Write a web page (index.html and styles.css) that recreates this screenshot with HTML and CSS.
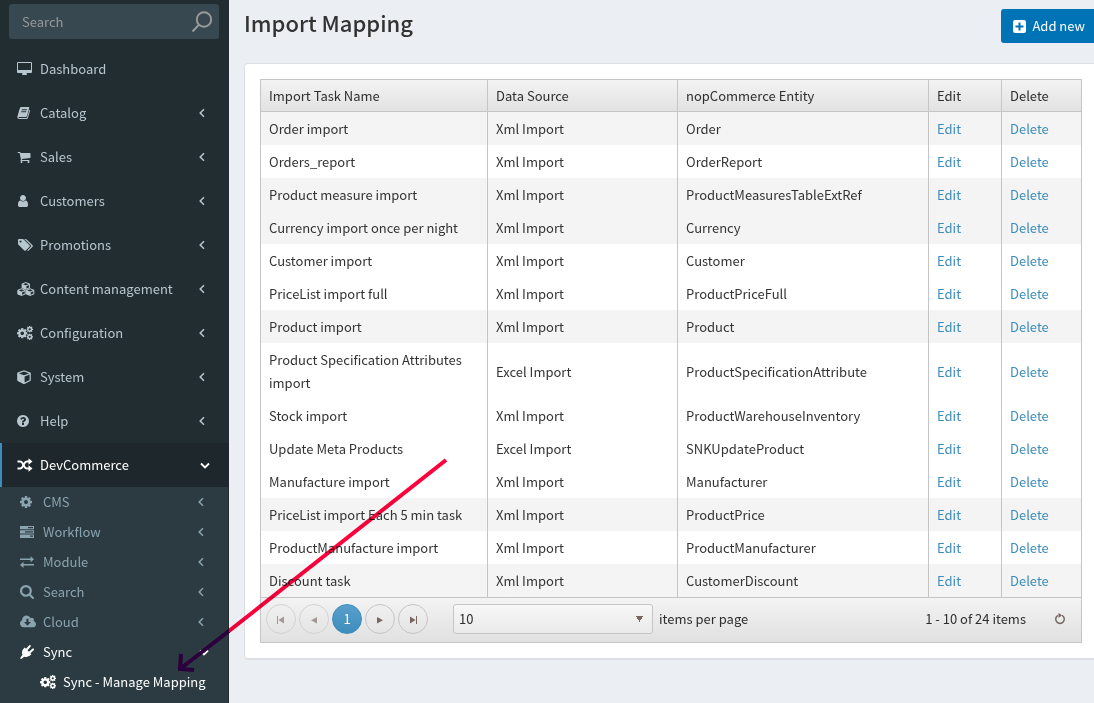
FILE: index.html
```
<!DOCTYPE html>
<html lang="en">
<head>
<meta charset="utf-8">
<title>Import Mapping</title>
<meta name="viewport" content="width=device-width, initial-scale=1">
<link rel="stylesheet" href="styles.css">
</head>
<body>
<svg class="sprite" aria-hidden="true">
  <symbol id="i-desktop" viewBox="0 0 1920 1792"><path d="M1728 992v-832q0-13-9.500-22.500t-22.500-9.500h-1600q-13 0-22.500 9.500t-9.500 22.500v832q0 13 9.500 22.500t22.500 9.500h1600q13 0 22.500-9.500t9.500-22.500zm128-832v1088q0 66-47 113t-113 47h-544q0 37 16 77.500t32 71 16 43.500q0 26-19 45t-45 19h-512q-26 0-45-19t-19-45q0-14 16-44t32-70 16-78h-544q-66 0-113-47t-47-113v-1088q0-66 47-113t113-47h1600q66 0 113 47t47 113z"/></symbol>
  <symbol id="i-book" viewBox="0 0 14 14"><path fill-rule="evenodd" d="M4.300 1h7.200q1 0 .7 1L10 10q-.3.900-1.200.900H2.200q-.8 0-.6.500.2.500.8.500h6.900q.6 0 .8-.6l2.300-7.600q.9.300.6 1.300L10.900 12q-.3 1-1.400 1H2.300Q.2 13 .3 10.700L2.800 2.300Q3.200 1 4.300 1zM5 3.300l-.3.900h5l.3-.9zM4.400 5.300l-.3.900h5l.3-.9z"/></symbol>
  <symbol id="i-cart" viewBox="0 0 1792 1792"><path d="M704 1536q0 52-38 90t-90 38-90-38-38-90 38-90 90-38 90 38 38 90zm896 0q0 52-38 90t-90 38-90-38-38-90 38-90 90-38 90 38 38 90zm128-1088v512q0 24-16.500 42.500t-40.500 21.500l-1044 122q13 60 13 70 0 16-24 64h920q26 0 45 19t19 45-19 45-45 19h-1024q-26 0-45-19t-19-45q0-11 8-31.500t16-36 21.500-40 15.500-29.500l-177-823h-204q-26 0-45-19t-19-45 19-45 45-19h256q16 0 28.500 6.500t19.500 15.500 13 24.500 8 26 5.500 29.500 4.500 26h1201q26 0 45 19t19 45z"/></symbol>
  <symbol id="i-user" viewBox="256 128 1280 1536"><path d="M1536 1399q0 109-62.500 187t-150.500 78h-854q-88 0-150.500-78t-62.500-187q0-85 8.500-160.500t31.500-152 58.500-131 94-89 134.500-34.500q131 128 313 128t313-128q76 0 134.500 34.500t94 89 58.500 131 31.500 152 8.500 160.500zm-256-887q0 159-112.500 271.500t-271.500 112.500-271.500-112.500-112.500-271.500 112.500-271.500 271.500-112.500 271.500 112.500 112.500 271.500z"/></symbol>
  <symbol id="i-tags" viewBox="0 64 2048 1664"><path d="M576 448q0-53-37.500-90.500t-90.500-37.500-90.500 37.500-37.500 90.500 37.500 90.500 90.500 37.500 90.500-37.500 37.500-90.500zm1067 576q0 53-37 90l-491 492q-39 37-91 37-53 0-90-37l-715-716q-38-37-64.500-101t-26.500-117v-416q0-52 38-90t90-38h416q53 0 117 26.500t102 64.500l715 714q37 39 37 91zm384 0q0 53-37 90l-491 492q-39 37-91 37-36 0-59-14t-53-45l470-470q37-37 37-90 0-52-37-91l-715-714q-38-38-102-64.500t-117-26.500h224q53 0 117 26.500t102 64.500l715 714q37 39 37 91z"/></symbol>
  <symbol id="i-cube" viewBox="0 0 14 14"><path fill-rule="evenodd" d="M7 .3l6.300 2.300q.5.200.5.800v6.900q0 .5-.5.800L7.500 13.900q-.5.200-1 0L.7 11.100q-.5-.3-.5-.8V3.400q0-.6.500-.8zM7 1.500L1.900 3.400 7 5.300l5.100-1.900zM7.600 12.500l5-2.500V4.600l-5 1.800z"/></symbol>
  <symbol id="i-cubes" viewBox="0 0 18 14"><g id="box"><path fill-rule="evenodd" d="M4.500 6.300l3.700 1.500q.5.200.5.700v3.200q0 .5-.5.700L5 13.800q-.5.200-1 0L.8 12.400q-.5-.2-.5-.7V8.500q0-.5.5-.7zM4.500 7.200L1.800 8.400l2.700 1.100 2.700-1.100zM5.100 12.800l2.600-1.200V9.300l-2.600 1.100z"/></g><use href="#box" x="8.600"/><use href="#box" x="4.300" y="-6.200"/></symbol>
  <symbol id="i-cog" viewBox="128 128 1536 1536"><path d="M1152 896q0-106-75-181t-181-75-181 75-75 181 75 181 181 75 181-75 75-181zm512-109v222q0 12-8 23t-20 13l-185 28q-19 54-39 91 35 50 107 138 10 12 10 25t-9 23q-27 37-99 108t-94 71q-12 0-26-9l-138-108q-44 23-91 38-16 136-29 186-7 28-36 28h-222q-14 0-24.500-8.500t-11.500-21.500l-28-184q-49-16-90-37l-141 107q-10 9-25 9-14 0-25-11-126-114-165-168-7-10-7-23 0-12 8-23 15-21 51-66.500t54-70.500q-27-50-41-99l-183-27q-13-2-21-12.500t-8-23.500v-222q0-12 8-23t19-13l186-28q14-46 39-92-40-57-107-138-10-12-10-24 0-10 9-23 26-36 98.500-107.500t94.500-71.500q13 0 26 10l138 107q44-23 91-38 16-136 29-186 7-28 36-28h222q14 0 24.500 8.500t11.500 21.500l28 184q49 16 90 37l142-107q9-9 24-9 13 0 25 10 129 119 165 170 7 8 7 22 0 12-8 23-15 21-51 66.500t-54 70.500q26 50 41 98l183 28q13 2 21 12.500t8 23.500z"/></symbol>
  <symbol id="i-cogs" viewBox="0 0 16 14"><use href="#i-cog" x="0" y="2" width="10.500" height="10.500"/><use href="#i-cog" x="9.500" y="0" width="6.500" height="6.500"/><use href="#i-cog" x="9.500" y="7.500" width="6.500" height="6.500"/></symbol>
  <symbol id="i-help" viewBox="128 128 1536 1536"><path d="M1024 1376v-192q0-14-9-23t-23-9h-192q-14 0-23 9t-9 23v192q0 14 9 23t23 9h192q14 0 23-9t9-23zm256-672q0-88-55.500-163t-138.500-116-170-41q-243 0-371 213-15 24 8 42l132 100q7 6 19 6 16 0 25-12 53-68 86-92 34-24 86-24 48 0 85.500 26t37.500 59q0 38-20 61t-68 45q-63 28-115.500 86.500t-52.500 125.500v36q0 14 9 23t23 9h192q14 0 23-9t9-23q0-19 21.500-49.500t54.500-49.500q32-18 49-28.500t46-35 44.500-48 28-60.500 12.500-81zm384 192q0 209-103 385.500t-279.500 279.500-385.500 103-385.500-103-279.500-279.500-103-385.500 103-385.500 279.500-279.500 385.500-103 385.500 103 279.500 279.500 103 385.500z"/></symbol>
  <symbol id="i-random" viewBox="0 0 15 14"><path fill="none" stroke="currentColor" stroke-width="2" d="M0 3.500h2.500q1.500 0 2.500 1.700l2 3.600q1 1.700 2.500 1.700H12M0 10.500h2.500Q4 10.500 5 8.800l2-3.600Q8 3.500 9.500 3.500H12"/><path d="M11 .2l4 3.300-4 3.300zM11 7.200l4 3.300-4 3.300z"/></symbol>
  <symbol id="i-tasks" viewBox="0 0 14 14"><path fill-rule="evenodd" d="M0 1h14v3.300H0zM8 2h5v1.200H8zM0 5.300h14v3.300H0zM5 6.300h8v1.200H5zM0 9.600h14v3.300H0zM10 10.600h3v1.200h-3z"/></symbol>
  <symbol id="i-exchange" viewBox="0 0 14 14"><path d="M0 3.500h10.500V1.200L14 4.300l-3.500 3V5.100H0zM14 9H3.500V6.800L0 9.900l3.500 3v-2.300H14z"/></symbol>
  <symbol id="i-search" viewBox="64 128 1664 1664"><path d="M1216 832q0-185-131.500-316.500t-316.500-131.500-316.500 131.500-131.500 316.500 131.500 316.500 316.500 131.500 316.500-131.500 131.500-316.500zm512 832q0 52-38 90t-90 38q-54 0-90-38l-343-342q-179 124-399 124-143 0-273.500-55.500t-225-150-150-225-55.500-273.500 55.500-273.500 150-225 225-150 273.500-55.500 273.500 55.500 225 150 150 225 55.500 273.500q0 220-124 399l343 343q37 37 37 90z"/></symbol>
  <symbol id="i-cloud" viewBox="0 128 1920 1536"><path d="M1280 928q0-14-9-23t-23-9h-224v-352q0-13-9.500-22.500t-22.500-9.500h-192q-13 0-22.500 9.500t-9.500 22.500v352h-224q-13 0-22.500 9.500t-9.500 22.500q0 14 9 23l352 352q9 9 23 9t23-9l351-351q10-12 10-24zm640 224q0 159-112.500 271.500t-271.500 112.500h-1088q-185 0-316.500-131.500t-131.500-316.500q0-130 70-240t188-165q-2-30-2-43 0-212 150-362t362-150q156 0 285.500 87t188.500 231q71-62 166-62 106 0 181 75t75 181q0 76-41 138 130 31 213.500 135.500t83.500 238.500z"/></symbol>
  <symbol id="i-plug" viewBox="0 0 14 14"><path d="M4.700 2.600l6.700 6.700q-3.200 3.800-7.200 2.400L1.600 13.800Q.5 14.200.2 13.200q0-.4.300-.8l2-2.600Q.8 5.800 4.700 2.600z"/><path fill="none" stroke="currentColor" stroke-width="2" stroke-linecap="round" d="M6.800 4.500l3-3.400M9.700 7.400l3.300-3"/></symbol>
  <symbol id="i-left" viewBox="0 0 8 10"><path fill="none" stroke="currentColor" stroke-width="1.500" d="M6 1.200L2.200 5 6 8.800"/></symbol>
  <symbol id="i-down" viewBox="0 0 10 8"><path fill="none" stroke="currentColor" stroke-width="1.800" d="M1 2.500l4 4 4-4"/></symbol>
  <symbol id="i-plus" viewBox="0 0 13 13"><path fill-rule="evenodd" d="M2 0h9q2 0 2 2v9q0 2-2 2H2q-2 0-2-2V2q0-2 2-2zM5.500 2.500v3h-3v2h3v3h2v-3h3v-2h-3v-3z"/></symbol>
  <symbol id="i-first" viewBox="0 0 10 10"><path d="M1 2h1v8H1zM8 2.500v7L2.500 6z"/></symbol>
  <symbol id="i-prev" viewBox="0 0 10 10"><path d="M8 3v6.500L2 6.200z"/></symbol>
  <symbol id="i-next" viewBox="0 0 10 10"><path d="M2 3v6.500l6-3.300z"/></symbol>
  <symbol id="i-last" viewBox="0 0 10 10"><path d="M8 2h1v8H8zM2 2.500v7L7.500 6z"/></symbol>
</svg>

<div class="layout">
  <aside class="sidebar">
    <form class="search">
      <input class="search-input" type="text" placeholder="Search" aria-label="Search">
      <button class="search-button" type="button" aria-label="Find"><svg viewBox="0 0 22 22"><circle cx="13" cy="8.500" r="7.200"/><path d="M8 13.700L1.500 20.500"/></svg></button>
    </form>
    <nav>
      <ul class="menu">
        <li><a class="item" href="#"><svg class="icon wide"><use href="#i-desktop"/></svg><span>Dashboard</span></a></li>
        <li><a class="item" href="#"><svg class="icon"><use href="#i-book"/></svg><span>Catalog</span><svg class="angle"><use href="#i-left"/></svg></a></li>
        <li><a class="item" href="#"><svg class="icon"><use href="#i-cart"/></svg><span>Sales</span><svg class="angle"><use href="#i-left"/></svg></a></li>
        <li><a class="item" href="#"><svg class="icon small"><use href="#i-user"/></svg><span>Customers</span><svg class="angle"><use href="#i-left"/></svg></a></li>
        <li><a class="item" href="#"><svg class="icon wide"><use href="#i-tags"/></svg><span>Promotions</span><svg class="angle"><use href="#i-left"/></svg></a></li>
        <li><a class="item" href="#"><svg class="icon wider"><use href="#i-cubes"/></svg><span>Content management</span><svg class="angle"><use href="#i-left"/></svg></a></li>
        <li><a class="item" href="#"><svg class="icon wide"><use href="#i-cogs"/></svg><span>Configuration</span><svg class="angle"><use href="#i-left"/></svg></a></li>
        <li><a class="item" href="#"><svg class="icon"><use href="#i-cube"/></svg><span>System</span><svg class="angle"><use href="#i-left"/></svg></a></li>
        <li><a class="item" href="#"><svg class="icon small"><use href="#i-help"/></svg><span>Help</span><svg class="angle"><use href="#i-left"/></svg></a></li>
        <li>
          <a class="item active" href="#"><svg class="icon wide"><use href="#i-random"/></svg><span>DevCommerce</span><svg class="angle down"><use href="#i-down"/></svg></a>
          <ul class="submenu">
            <li><a class="subitem" href="#"><svg class="icon small"><use href="#i-cog"/></svg><span>CMS</span><svg class="angle"><use href="#i-left"/></svg></a></li>
            <li><a class="subitem" href="#"><svg class="icon"><use href="#i-tasks"/></svg><span>Workflow</span><svg class="angle"><use href="#i-left"/></svg></a></li>
            <li><a class="subitem" href="#"><svg class="icon"><use href="#i-exchange"/></svg><span>Module</span><svg class="angle"><use href="#i-left"/></svg></a></li>
            <li><a class="subitem" href="#"><svg class="icon"><use href="#i-search"/></svg><span>Search</span><svg class="angle"><use href="#i-left"/></svg></a></li>
            <li><a class="subitem" href="#"><svg class="icon wide"><use href="#i-cloud"/></svg><span>Cloud</span><svg class="angle"><use href="#i-left"/></svg></a></li>
            <li>
              <a class="subitem open" href="#"><svg class="icon"><use href="#i-plug"/></svg><span>Sync</span><svg class="angle down"><use href="#i-down"/></svg></a>
              <ul class="leafmenu">
                <li><a class="subitem open" href="#"><svg class="icon wide"><use href="#i-cogs"/></svg><span>Sync - Manage Mapping</span></a></li>
              </ul>
            </li>
          </ul>
        </li>
      </ul>
    </nav>
  </aside>

  <main class="content">
    <header class="heading">
      <h1>Import Mapping</h1>
      <button class="add" type="button"><svg><use href="#i-plus"/></svg>Add new</button>
    </header>
    <section class="panel">
      <div class="grid">
        <table>
          <colgroup><col class="c-name"><col class="c-source"><col><col class="c-edit"><col class="c-delete"></colgroup>
          <thead><tr><th>Import Task Name</th><th>Data Source</th><th>nopCommerce Entity</th><th>Edit</th><th>Delete</th></tr></thead>
          <tbody>
            <tr class="alt"><td>Order import</td><td>Xml Import</td><td>Order</td><td><a href="#">Edit</a></td><td><a href="#">Delete</a></td></tr>
            <tr><td>Orders_report</td><td>Xml Import</td><td>OrderReport</td><td><a href="#">Edit</a></td><td><a href="#">Delete</a></td></tr>
            <tr class="alt"><td>Product measure import</td><td>Xml Import</td><td>ProductMeasuresTableExtRef</td><td><a href="#">Edit</a></td><td><a href="#">Delete</a></td></tr>
            <tr class="alt"><td>Currency import once per night</td><td>Xml Import</td><td>Currency</td><td><a href="#">Edit</a></td><td><a href="#">Delete</a></td></tr>
            <tr><td>Customer import</td><td>Xml Import</td><td>Customer</td><td><a href="#">Edit</a></td><td><a href="#">Delete</a></td></tr>
            <tr><td>PriceList import full</td><td>Xml Import</td><td>ProductPriceFull</td><td><a href="#">Edit</a></td><td><a href="#">Delete</a></td></tr>
            <tr class="alt"><td>Product import</td><td>Xml Import</td><td>Product</td><td><a href="#">Edit</a></td><td><a href="#">Delete</a></td></tr>
            <tr><td>Product Specification Attributes import</td><td>Excel Import</td><td>ProductSpecificationAttribute</td><td><a href="#">Edit</a></td><td><a href="#">Delete</a></td></tr>
            <tr><td>Stock import</td><td>Xml Import</td><td>ProductWarehouseInventory</td><td><a href="#">Edit</a></td><td><a href="#">Delete</a></td></tr>
            <tr><td>Update Meta Products</td><td>Excel Import</td><td>SNKUpdateProduct</td><td><a href="#">Edit</a></td><td><a href="#">Delete</a></td></tr>
            <tr><td>Manufacture import</td><td>Xml Import</td><td>Manufacturer</td><td><a href="#">Edit</a></td><td><a href="#">Delete</a></td></tr>
            <tr class="alt"><td>PriceList import Each 5 min task</td><td>Xml Import</td><td>ProductPrice</td><td><a href="#">Edit</a></td><td><a href="#">Delete</a></td></tr>
            <tr><td>ProductManufacture import</td><td>Xml Import</td><td>ProductManufacturer</td><td><a href="#">Edit</a></td><td><a href="#">Delete</a></td></tr>
            <tr class="alt"><td>Discount task</td><td>Xml Import</td><td>CustomerDiscount</td><td><a href="#">Edit</a></td><td><a href="#">Delete</a></td></tr>
          </tbody>
        </table>
        <div class="pager">
          <div class="pages">
            <button class="page faded" type="button" aria-label="First page"><svg><use href="#i-first"/></svg></button>
            <button class="page faded" type="button" aria-label="Previous page"><svg><use href="#i-prev"/></svg></button>
            <button class="page current" type="button">1</button>
            <button class="page" type="button" aria-label="Next page"><svg><use href="#i-next"/></svg></button>
            <button class="page" type="button" aria-label="Last page"><svg><use href="#i-last"/></svg></button>
          </div>
          <select class="size" id="page-size"><option>10</option><option>20</option><option>50</option></select>
          <label for="page-size">items per page</label>
          <span class="info">1 - 10 of 24 items</span>
          <button class="refresh" type="button" aria-label="Refresh"><svg viewBox="0 0 12 12"><path d="M8 2.300A4.300 4.300 0 1 1 4 2.300" fill="none" stroke="currentColor" stroke-width="1.500"/><path d="M4.500 0L8 2.200 4.500 5z"/></svg></button>
        </div>
      </div>
    </section>
  </main>
</div>

<svg class="pointer red" viewBox="0 0 1094 703" aria-hidden="true"><path d="M446 460L229 631"/></svg>
<svg class="pointer dark" viewBox="0 0 1094 703" aria-hidden="true"><path d="M229 631L180 669M181 654L180 669L194 670"/></svg>
</body>
</html>
```
FILE: styles.css
```
* { box-sizing: border-box; }

body {
  margin: 0;
  background: #ebeef3;
  color: #333;
  font: 13px/20px "Noto Sans CJK SC", "Noto Sans", sans-serif;
}

button, input, select { font: inherit; color: inherit; margin: 0; }
button { cursor: pointer; }
a { text-decoration: none; color: inherit; }
ul { list-style: none; margin: 0; padding: 0; }
svg { fill: currentColor; flex: none; }
.sprite { position: absolute; width: 0; height: 0; }

.layout { display: flex; min-height: 100vh; }

/* Sidebar */
.sidebar { flex: none; width: 229px; background: #222d32; color: #b8c7ce; }
.search { display: flex; margin: 4px 10px 8px 9px; height: 35px; background: #374850; border-radius: 3px; }
.search-input { flex: 1; min-width: 0; border: 0; background: none; padding: 0 13px; outline: 0; }
.search-input::placeholder { color: #999; opacity: 1; }
.search-button { border: 0; background: none; padding: 0 6px; color: #999; display: flex; align-items: center; }
.search-button svg { width: 22px; height: 22px; fill: none; stroke: currentColor; stroke-width: 2; }

.item, .subitem { display: flex; align-items: center; }
.item { height: 44px; padding: 0 23px 0 15px; border-left: 2px solid transparent; }
.item span { flex: 1; }
.item .icon, .subitem .icon { width: 14px; height: 14px; margin-right: 9px; }
.item .icon.wide { width: 16px; margin-right: 7px; }
.item .icon.wider { width: 18px; margin-right: 5px; }
.item .icon.small { width: 12px; height: 12px; margin-right: 11px; }
.item.active { background: #1e282c; color: #fff; border-left-color: #3c8dbc; padding-right: 19px; }
.angle { width: 8px; height: 10px; }
.angle.down { width: 10px; height: 8px; }

.submenu { background: #2c3b41; color: #8aa4af; margin-right: 1px; padding-bottom: 6px; }
.subitem { height: 30px; padding: 0 23px 0 20px; }
.subitem span { flex: 1; }
.subitem .icon.wide { width: 16px; margin-right: 7px; }
.subitem .icon.small { width: 12px; height: 12px; margin-right: 11px; }
.subitem.open { color: #fff; padding-right: 19px; }
.leafmenu .subitem.open { padding: 0 0 0 40px; }

/* Content */
.content { flex: 1; min-width: 0; padding-left: 15px; }
.heading { display: flex; justify-content: space-between; padding-top: 4px; height: 63px; }
h1 { margin: 0; font-size: 22px; line-height: 36px; font-weight: 500; }
.add { display: flex; align-items: center; gap: 6px; height: 34px; margin-top: 5px; padding: 0 9px 0 12px; border: 0; border-radius: 3px 0 0 3px; background: #0073b7; color: #fff; }
.add svg { width: 13px; height: 13px; }

.panel { background: #fff; border: 1px solid #dcdfe3; border-right: 0; border-radius: 4px 0 0 4px; border-bottom-width: 2px; padding: 15px 12px 15px 15px; }
.grid { border: 1px solid #c5c5c5; }
table { width: 100%; table-layout: fixed; border-collapse: separate; border-spacing: 0; }
.c-name { width: 226px; }
.c-source { width: 190px; }
.c-edit { width: 73px; }
.c-delete { width: 80px; }
th, td { text-align: left; padding: 5px 8px; line-height: 23px; }
th + th, td + td { border-left: 1px solid #c5c5c5; }
th { font-weight: 400; color: #2e2e2e; padding: 4px 8px; border-bottom: 1px solid #c5c5c5; }
thead { background: linear-gradient(#f3f3f3, #e1e1e1); }
.alt { background: #f4f4f4; }
td a { color: #428bca; color: #3c8dbc; }

.pager { display: flex; align-items: center; min-height: 45px; padding: 5px 15px 8px 5px; border-top: 1px solid #c5c5c5; background: linear-gradient(#f3f3f3, #e1e1e1); color: #2e2e2e; }
.pages { display: flex; gap: 3px; margin-right: 25px; }
.page { display: flex; align-items: center; justify-content: center; width: 30px; height: 30px; padding: 0; border: 1px solid #c5c5c5; border-radius: 50%; background: none; color: #786662; }
.page svg { width: 10px; height: 10px; }
.page.faded { border-color: #d2d2d2; color: #a39794; }
.page.current { border-color: #3c8dbc; background: linear-gradient(#5a9fcb, #3c8dbc); color: #fff; }
.size { appearance: none; width: 200px; height: 30px; padding: 0 5px; border: 1px solid #c5c5c5; border-radius: 3px; background: conic-gradient(from -30deg at 50% 100%, #786662 60deg, transparent 0) right 9px center / 7px 6px no-repeat, linear-gradient(#f7f7f7, #eaeaea); }
.pager label { margin-left: 6px; }
.info { margin-left: auto; }
.refresh { display: flex; padding: 0; margin-left: 28px; border: 0; background: none; color: #786662; }
.refresh svg { width: 12px; height: 12px; }

/* Annotation drawn over the page */
.pointer { position: absolute; left: 0; top: 0; width: 1094px; height: 703px; fill: none; stroke-width: 4; pointer-events: none; }
.pointer.red { stroke: #ff003c; mix-blend-mode: multiply; }
.pointer.dark { stroke: #2b003d; }
```
